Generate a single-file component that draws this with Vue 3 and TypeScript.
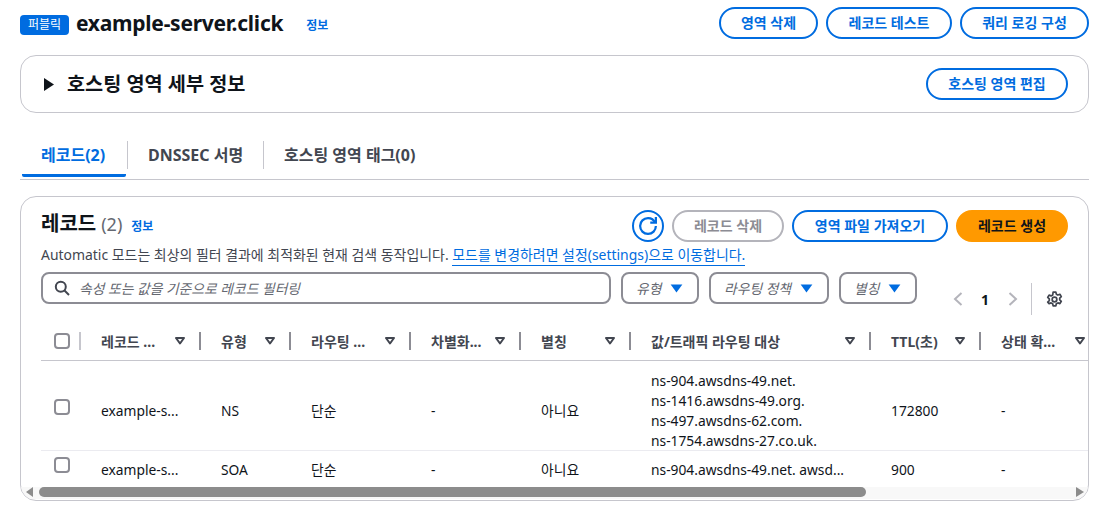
<script setup lang="ts">
interface Col { label: string; width: number }
const cols: Col[] = [
  { label: '레코드 ...', width: 120 },
  { label: '유형', width: 90 },
  { label: '라우팅 ...', width: 120 },
  { label: '차별화...', width: 110 },
  { label: '별칭', width: 110 },
  { label: '값/트래픽 라우팅 대상', width: 240 },
  { label: 'TTL(초)', width: 110 },
  { label: '상태 확...', width: 120 },
]
const gridTemplate = '38px ' + cols.map((c) => c.width + 'px').join(' ')
const rows = [
  { name: 'example-s...', type: 'NS', routing: '단순', diff: '-', alias: '아니요', value: ['ns-904.awsdns-49.net.', 'ns-1416.awsdns-49.org.', 'ns-497.awsdns-62.com.', 'ns-1754.awsdns-27.co.uk.'], ttl: '172800', health: '-', cls: 'tall' },
  { name: 'example-s...', type: 'SOA', routing: '단순', diff: '-', alias: '아니요', value: ['ns-904.awsdns-49.net. awsd...'], ttl: '900', health: '-', cls: 'short' },
]
const filters = ['유형', '라우팅 정책', '별칭']
const tabs = ['레코드(2)', 'DNSSEC 서명', '호스팅 영역 태그(0)']
</script>

<template>
  <div class="page">
    <header class="top">
      <div class="title-group">
        <span class="badge">퍼블릭</span>
        <h1 class="title">example-server.click</h1>
        <a class="info info-title">정보</a>
      </div>
      <div class="btn-row">
        <button class="btn w99">영역 삭제</button>
        <button class="btn w126">레코드 테스트</button>
        <button class="btn w129">쿼리 로깅 구성</button>
      </div>
    </header>

    <section class="details">
      <div class="details-left">
        <svg class="caret" width="10" height="13" viewBox="0 0 10 13"><path d="M0 0 L10 6.500 L0 13 Z" fill="#0f141a" /></svg>
        <h2 class="details-title">호스팅 영역 세부 정보</h2>
      </div>
      <button class="btn w142">호스팅 영역 편집</button>
    </section>

    <nav class="tabs">
      <div v-for="(t, i) in tabs" :key="t" class="tab" :class="{ active: i === 0, first: i === 0, second: i === 1 }">
        <span>{{ t }}</span>
      </div>
    </nav>

    <section class="records">
      <div class="records-head">
        <div class="records-title">
          <h2 class="rec-h">레코드</h2>
          <span class="rec-count">(2)</span>
          <a class="info info-rec">정보</a>
        </div>
        <div class="rec-actions">
          <button class="icon-btn" aria-label="새로 고침">
            <svg width="18" height="18" viewBox="0 0 16 16" fill="none" stroke="#006ce0" stroke-width="2">
              <path d="M10 5h5V0" />
              <path d="M15 8a6.957 6.957 0 0 1-7 7 6.957 6.957 0 0 1-7-7 6.957 6.957 0 0 1 7-7 6.870 6.870 0 0 1 6.300 4" />
            </svg>
          </button>
          <button class="btn disabled w112">레코드 삭제</button>
          <button class="btn w156">영역 파일 가져오기</button>
          <button class="btn primary w112">레코드 생성</button>
        </div>
      </div>

      <p class="desc">Automatic 모드는 최상의 필터 결과에 최적화된 현재 검색 동작입니다. <a class="desc-link">모드를 변경하려면 설정(settings)으로 이동합니다.</a></p>

      <div class="filters">
        <div class="search">
          <svg width="16" height="16" viewBox="0 0 16 16" fill="none" stroke="#424650" stroke-width="2">
            <circle cx="6.800" cy="6.800" r="5" />
            <path d="M10.500 10.500 L15 15" />
          </svg>
          <span class="placeholder">속성 또는 값을 기준으로 레코드 필터링</span>
        </div>
        <div v-for="f in filters" :key="f" class="select" :class="'sel-' + f.length">
          <span class="placeholder">{{ f }}</span>
          <svg width="13" height="9" viewBox="0 0 14 10"><path d="M0.500 0.500 H13.500 L7 9.500 Z" fill="#006ce0" /></svg>
        </div>
        <div class="pager">
          <svg width="10" height="14" viewBox="0 0 10 14" fill="none" stroke="#b4b4bb" stroke-width="2"><path d="M8.500 1 L2 7 L8.500 13" /></svg>
          <span class="page-num">1</span>
          <svg width="10" height="14" viewBox="0 0 10 14" fill="none" stroke="#b4b4bb" stroke-width="2"><path d="M1.500 1 L8 7 L1.500 13" /></svg>
          <span class="pager-sep"></span>
          <svg width="17" height="17" viewBox="0 0 16 16" fill="none" stroke="#424650" stroke-width="1.600">
            <circle cx="8" cy="8" r="2.200" />
            <path d="M6.700 1h2.600l.4 2 1.500.8 1.900-.7 1.300 2.200-1.500 1.400v1.600l1.500 1.400-1.300 2.200-1.900-.7-1.500.8-.4 2H6.700l-.4-2-1.500-.8-1.900.7L1.600 10.500l1.500-1.400V7.500L1.600 6.100l1.300-2.200 1.900.7 1.500-.8z" stroke-linejoin="round" />
          </svg>
        </div>
      </div>

      <div class="table">
        <div class="thead" :style="{ gridTemplateColumns: gridTemplate }">
          <div class="cell-check"><span class="checkbox"></span></div>
          <div v-for="(c, i) in cols" :key="c.label" class="th" :class="{ 'th-first': i === 0 }">
            <span class="th-label">{{ c.label }}</span>
            <svg width="10" height="8" viewBox="0 0 10 8" fill="none" stroke="#424650" stroke-width="2"><path d="M1 1 H9 L5 6.500 Z" stroke-linejoin="round" /></svg>
          </div>
        </div>
        <div v-for="r in rows" :key="r.type" class="tr" :class="r.cls" :style="{ gridTemplateColumns: gridTemplate }">
          <div class="cell-check row-check"><span class="checkbox"></span></div>
          <div class="td">{{ r.name }}</div>
          <div class="td">{{ r.type }}</div>
          <div class="td">{{ r.routing }}</div>
          <div class="td">{{ r.diff }}</div>
          <div class="td">{{ r.alias }}</div>
          <div class="td value"><div v-for="v in r.value" :key="v">{{ v }}</div></div>
          <div class="td">{{ r.ttl }}</div>
          <div class="td">{{ r.health }}</div>
        </div>
      </div>

      <div class="scrollbar">
        <span class="arrow left"></span>
        <div class="track"><div class="thumb"></div></div>
        <span class="arrow right"></span>
      </div>
    </section>
  </div>
</template>

<style>
html, body { margin: 0; background: #fff; overflow: hidden; }
</style>

<style scoped>
* { box-sizing: border-box; }
.page {
  width: 1098px;
  height: 514px;
  padding: 7px 9px 0 20px;
  font-family: "Noto Sans", "Noto Sans CJK KR", sans-serif;
  font-size: 14px;
  color: #0f141a;
  overflow: hidden;
}
.top { display: flex; justify-content: space-between; align-items: center; height: 32px; }
.title-group { display: flex; align-items: center; }
.badge {
  background: #006ce0; color: #fff; font-size: 12px; line-height: 20px; height: 20px;
  width: 49px; text-align: center; border-radius: 4px; margin-top: 4px;
}
.title { margin: 0 0 0 7px; font-size: 21px; line-height: 30px; font-weight: 700; letter-spacing: -0.250px; }
.info { color: #006ce0; font-size: 12px; font-weight: 700; line-height: 16px; }
.info-title { margin: 5px 0 0 23px; }
.btn-row { display: flex; gap: 8px; }
.btn {
  height: 32px; border: 2px solid #006ce0; border-radius: 20px; background: #fff; color: #006ce0;
  font: 700 14px/18px "Noto Sans", "Noto Sans CJK KR", sans-serif; padding: 0; white-space: nowrap;
}
.w99 { width: 99px; } .w126 { width: 126px; } .w129 { width: 129px; } .w142 { width: 142px; }
.w112 { width: 112px; } .w156 { width: 156px; }
.btn.disabled { border-color: #b4b4bb; color: #8c8c94; }
.btn.primary { background: #ff9900; border-color: #ff9900; color: #0f141a; }

.details {
  margin-top: 16px; height: 58px; border: 1px solid #c6c6cd; border-radius: 16px;
  display: flex; justify-content: space-between; align-items: center; padding: 0 20px 0 23px;
}
.details-left { display: flex; align-items: center; gap: 13px; }
.details-title { margin: 0; font-size: 19.700px; line-height: 24px; font-weight: 700; }

.tabs {
  margin-top: 26px; height: 41px; display: flex; border-bottom: 1px solid #c6c6cd; padding-left: 2px;
}
.tab {
  height: 41px; display: flex; align-items: flex-start; font-weight: 700; font-size: 16px;
  line-height: 28px; color: #424650; position: relative;
}
.tab > span { padding: 0 20px; display: block; white-space: nowrap; }
.tab.first { width: 104px; border-bottom: 3px solid #006ce0; border-radius: 0 0 2px 2px; color: #006ce0; height: 38px; padding-top: 2px; }
.tab.first > span { padding-left: 19px; }
.tab.second { width: 136px; border-left: 1px solid #c6c6cd; height: 28px; margin-top: 2px; margin-left: 1px; }
.tab:nth-child(3) { border-left: 1px solid #c6c6cd; height: 28px; margin-top: 2px; }

.records {
  margin-top: 16px; height: 305px; border: 1px solid #c6c6cd; border-radius: 16px; overflow: hidden;
  padding-top: 13px; position: relative;
}
.records-head { display: flex; justify-content: space-between; align-items: center; padding: 0 20px; height: 32px; }
.records-title { display: flex; align-items: center; margin-top: -4px; }
.rec-h { margin: 0; font-size: 20px; line-height: 24px; font-weight: 700; }
.rec-count { font-size: 18px; color: #656871; margin-left: 5px; line-height: 24px; }
.info-rec { margin: 5px 0 0 9px; }
.rec-actions { display: flex; gap: 8px; align-items: center; }
.icon-btn {
  width: 32px; height: 32px; border: 2px solid #006ce0; border-radius: 50%; background: #fff; padding: 0;
  display: flex; align-items: center; justify-content: center;
}
.desc { margin: 3px 0 0; padding: 0 20px; font-size: 13.950px; line-height: 20px; color: #424650; white-space: nowrap; }
.desc-link { color: #006ce0; border-bottom: 1px solid #006ce0; padding-bottom: 1px; }

.filters { display: flex; gap: 10px; margin-top: 7px; padding-left: 20px; height: 32px; position: relative; }
.search {
  width: 570px; height: 32px; border: 2px solid #8c8c94; border-radius: 8px; display: flex; align-items: center;
  gap: 9px; padding-left: 11px;
}
.placeholder { font-size: 13.800px; font-style: italic; color: #656871; white-space: nowrap; }
.select {
  height: 32px; border: 2px solid #8c8c94; border-radius: 8px; display: flex; align-items: center;
  justify-content: space-between; padding: 0 14px 0 13px;
}
.sel-2 { width: 78px; }
.sel-6 { width: 120px; }
.pager { display: flex; align-items: center; margin: 11px 0 0 26px; height: 32px; width: 130px; position: relative; }
.page-num { font-size: 14px; font-weight: 700; color: #0f141a; margin: 0 19px 0 18px; }
.pager-sep { width: 1px; height: 32px; background: #c6c6cd; margin: 0 14px 0 13px; }

.table { margin-top: 12px; height: 171px; overflow: hidden; padding-left: 20px; }
.thead, .tr { display: grid; width: 1078px; }
.thead { height: 45px; border-bottom: 1px solid #c6c6cd; align-items: center; padding-top: 5px; }
.cell-check { display: flex; align-items: center; padding-left: 13px; height: 100%; }
.checkbox { width: 16px; height: 16px; border: 2px solid #8c8c94; border-radius: 4px; display: block; background: #fff; }
.th {
  display: flex; align-items: center; justify-content: space-between; height: 18px; border-left: 2px solid #8c8c94;
  padding: 0 14px 0 20px; font-size: 14px; font-weight: 700; color: #424650; white-space: nowrap;
}
.th-first { border-left-color: #c6c6cd; }
.tr { border-bottom: 1px solid #ebebf0; font-size: 13.800px; color: #0f141a; }
.tr.tall { height: 90px; padding-top: 10px; }
.tr.short { height: 37px; border-bottom: 0; }
.td { padding-left: 22px; display: flex; flex-direction: column; justify-content: center; white-space: nowrap; line-height: 20px; }
.row-check { align-items: flex-start; padding-top: 28px; }
.short .row-check { padding-top: 6px; }
.short .td { justify-content: flex-start; padding-top: 9px; }

.scrollbar { display: flex; align-items: center; height: 12px; background: #f8f8f8; padding: 0 4px 2px 5px; }
.track { flex: 1; height: 10px; margin: 0 2px; }
.thumb { width: 827px; height: 10px; background: #8c8c8c; border-radius: 5px; margin-left: 4px; }
.arrow { width: 0; height: 0; border-top: 5px solid transparent; border-bottom: 5px solid transparent; }
.arrow.left { border-right: 7px solid #8c8c8c; }
.arrow.right { border-left: 8px solid #8c8c8c; }
</style>
